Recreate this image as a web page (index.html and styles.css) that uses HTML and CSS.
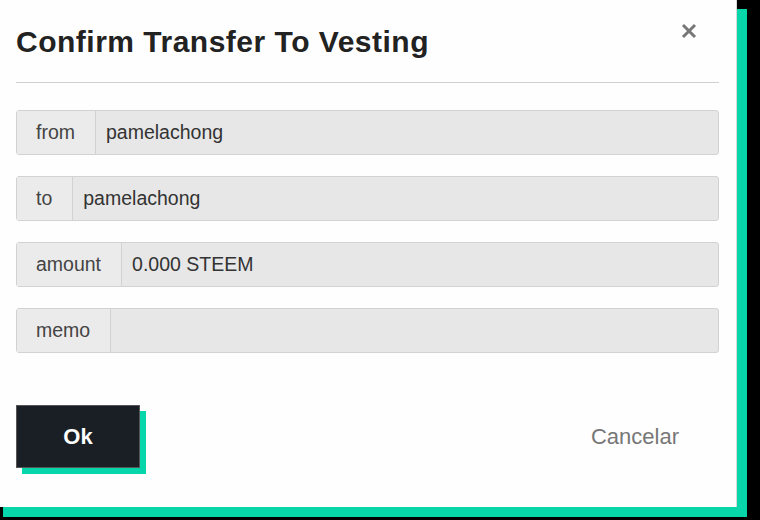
FILE: index.html
```html
<!DOCTYPE html>
<html>
<head>
<meta charset="utf-8">
<link rel="stylesheet" href="styles.css">
</head>
<body>
<div class="modal">
  <div class="header">
    <h1 class="title">Confirm Transfer To Vesting</h1>
    <svg class="close" width="16" height="16" viewBox="0 0 16 16"><path d="M2 2 L14 14 M14 2 L2 14" stroke="#777" stroke-width="3" stroke-linecap="butt"/></svg>
  </div>
  <div class="divider"></div>
  <div class="fields">
    <div class="group"><span class="label">from</span><span class="value">pamelachong</span></div>
    <div class="group"><span class="label">to</span><span class="value">pamelachong</span></div>
    <div class="group"><span class="label">amount</span><span class="value">0.000 STEEM</span></div>
    <div class="group"><span class="label">memo</span><span class="value"></span></div>
  </div>
  <div class="actions">
    <button class="ok">Ok</button>
    <span class="cancel">Cancelar</span>
  </div>
</div>
</body>
</html>
```
FILE: styles.css
```css
html, body {
  margin: 0;
  padding: 0;
  background: #000;
  width: 760px;
  height: 520px;
  overflow: hidden;
  font-family: "Liberation Sans", Arial, sans-serif;
}
.modal {
  margin: -1px 0 0 -7px;
  width: 744px;
  height: 508px;
  box-sizing: border-box;
  background: #fefefe;
  border-right: 1px solid #d8d8d8;
  box-shadow: 10px 10px 0 #06d6a9;
  padding: 0 0 0 23px;
}
.header {
  display: flex;
  justify-content: space-between;
  align-items: flex-start;
  width: 703px;
  height: 84px;
}
.title {
  margin: 25px 0 0 0;
  font-size: 30px;
  line-height: 36px;
  font-weight: bold;
  color: #222;
  letter-spacing: 0.5px;
}
.close {
  margin: 24px 22px 0 0;
}
.divider {
  width: 703px;
  height: 0;
  border-top: 1px solid #d0d0d0;
  margin-top: -1px;
}
.fields {
  display: flex;
  flex-direction: column;
  gap: 21px;
  margin-top: 27px;
  width: 703px;
}
.group {
  display: flex;
  height: 45px;
  box-sizing: border-box;
  border: 1px solid #d2d2d2;
  border-radius: 3px;
  background: #e7e7e7;
  font-size: 19.5px;
}
.label {
  display: flex;
  align-items: center;
  padding: 0 20px 0 19px;
  background: #ebebeb;
  color: #444;
  border-right: 1px solid #d2d2d2;
}
.value {
  display: flex;
  align-items: center;
  padding-left: 10px;
  color: #333;
}
.actions {
  display: flex;
  justify-content: space-between;
  align-items: center;
  margin-top: 52px;
  width: 663px;
}
.ok {
  width: 124px;
  height: 63px;
  border: 1px solid #555;
  background: #1a1f26;
  color: #fff;
  font-family: "Liberation Sans", Arial, sans-serif;
  font-weight: bold;
  font-size: 22px;
  box-shadow: 6px 6px 0 #06d6a9;
  padding: 0;
}
.cancel {
  font-size: 22px;
  color: #777;
}
```
